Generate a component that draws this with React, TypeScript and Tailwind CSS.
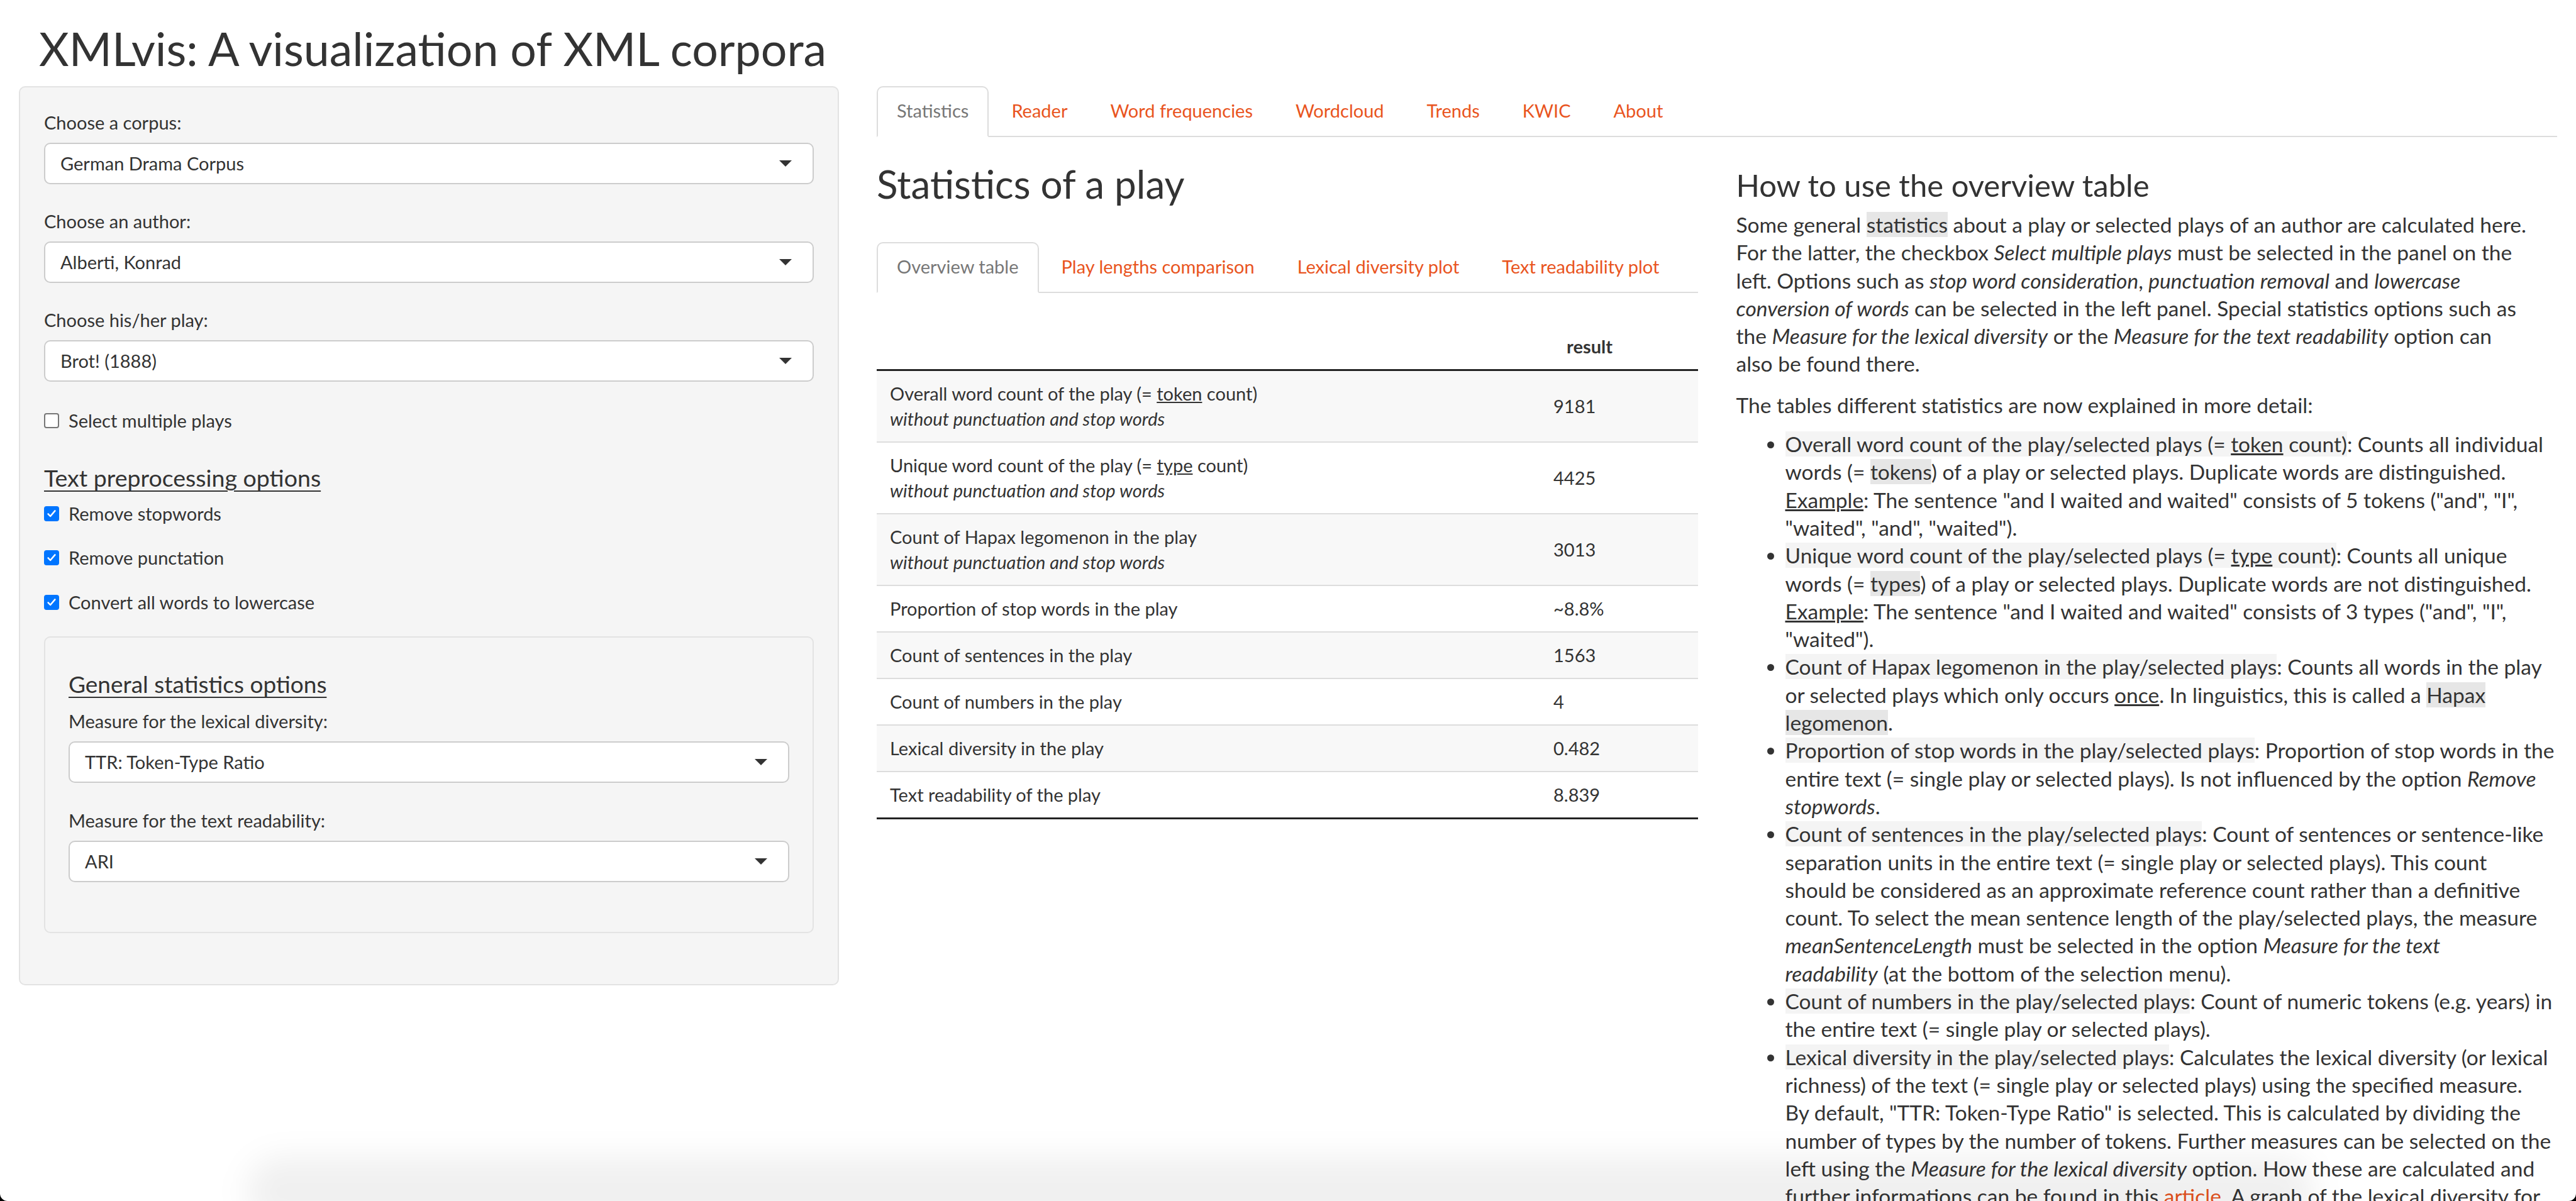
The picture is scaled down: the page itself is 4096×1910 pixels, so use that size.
import React from "react";

const mainTabs = ["Statistics", "Reader", "Word frequencies", "Wordcloud", "Trends", "KWIC", "About"];
const subTabs = ["Overview table", "Play lengths comparison", "Lexical diversity plot", "Text readability plot"];

type Row = { label: React.ReactNode; note?: boolean; value: string };

const rows: Row[] = [
  { label: <>Overall word count of the play (= <u>token</u> count)</>, note: true, value: "9181" },
  { label: <>Unique word count of the play (= <u>type</u> count)</>, note: true, value: "4425" },
  { label: "Count of Hapax legomenon in the play", note: true, value: "3013" },
  { label: "Proportion of stop words in the play", value: "~8.8%" },
  { label: "Count of sentences in the play", value: "1563" },
  { label: "Count of numbers in the play", value: "4" },
  { label: "Lexical diversity in the play", value: "0.482" },
  { label: "Text readability of the play", value: "8.839" },
];

function SelectBox({ value }: { value: string }) {
  return (
    <div className="flex h-[66px] items-center justify-between rounded-[10px] border-2 border-[#ccc] bg-white pl-[24px] pr-[33px]">
      <span>{value}</span>
      <span className="h-0 w-0 border-x-[10px] border-t-[10px] border-x-transparent border-t-[#333]" />
    </div>
  );
}

function Field({ label, value, className = "" }: { label: string; value: string; className?: string }) {
  return (
    <div className={className}>
      <div className="mb-[10px]">{label}</div>
      <SelectBox value={value} />
    </div>
  );
}

function Check({ label, checked, className = "" }: { label: string; checked?: boolean; className?: string }) {
  return (
    <div className={`flex items-center gap-[15px] ${className}`}>
      {checked ? (
        <span className="flex h-[24px] w-[24px] items-center justify-center rounded-[4px] bg-[#0075ff]">
          <svg viewBox="0 0 24 24" className="h-[20px] w-[20px]">
            <path d="M5.5 12.5l4.2 4.3L18.5 6.5" fill="none" stroke="white" strokeWidth="3" strokeLinecap="round" strokeLinejoin="round" />
          </svg>
        </span>
      ) : (
        <span className="h-[24px] w-[24px] rounded-[4px] border-2 border-[#767676] bg-white" />
      )}
      <span>{label}</span>
    </div>
  );
}

function Tabs({ items, active }: { items: string[]; active: string }) {
  return (
    <ul className="flex border-b-2 border-[#ddd]">
      {items.map((t) => (
        <li key={t} className="-mb-[2px] mr-[4px]">
          <a
            className={
              t === active
                ? "block rounded-t-[10px] border-2 border-[#ddd] border-b-white bg-white px-[30px] pt-[15px] pb-[18px] text-[#777]"
                : "block rounded-t-[10px] border-2 border-transparent px-[30px] pt-[15px] pb-[18px] text-[#e95420]"
            }
          >
            {t}
          </a>
        </li>
      ))}
    </ul>
  );
}

const lead = "bg-[#f4f4f4]";
const dark = "bg-[#e6e6e6]";

export default function App() {
  return (
    <div className="relative min-h-screen bg-white px-[30px] font-['Lato',sans-serif] text-[29px] leading-[44px] text-[#333]">
      <h1 className="pl-[32px] pt-[33px] text-[73.5px] leading-[88px] mb-[16px]">XMLvis: A visualization of XML corpora</h1>

      <div className="grid grid-cols-[1304px_1fr] gap-x-[60px]">
        {/* sidebar */}
        <div className="self-start rounded-[10px] border-2 border-[#e3e3e3] bg-[#f5f5f5] px-[38px] pt-[34px] pb-[81px]">
          <Field label="Choose a corpus:" value="German Drama Corpus" />
          <Field label="Choose an author:" value="Alberti, Konrad" className="mt-[37px]" />
          <Field label="Choose his/her play:" value="Brot! (1888)" className="mt-[37px]" />
          <Check label="Select multiple plays" className="mt-[40px]" />

          <h4 className="mt-[45px] text-[37.5px] leading-[47px] underline decoration-[2px] underline-offset-[6px]">Text preprocessing options</h4>
          <Check label="Remove stopwords" checked className="mt-[12px]" />
          <Check label="Remove punctation" checked className="mt-[26px]" />
          <Check label="Convert all words to lowercase" checked className="mt-[27px]" />

          <div className="mt-[32px] rounded-[10px] border-2 border-[#e3e3e3] bg-[#f5f5f5] px-[37px] pt-[50px] pb-[79px]">
            <h4 className="text-[37px] leading-[47px] underline decoration-[2px] underline-offset-[6px]">General statistics options</h4>
            <Field label="Measure for the lexical diversity:" value="TTR: Token-Type Ratio" className="mt-[14px]" />
            <Field label="Measure for the text readability:" value="ARI" className="mt-[38px]" />
          </div>
        </div>

        {/* main panel */}
        <div>
          <Tabs items={mainTabs} active="Statistics" />

          <div className="grid grid-cols-2 gap-x-[61px]">
            <div>
              <h2 className="mt-[38px] text-[62px] leading-[72px]">Statistics of a play</h2>
              <div className="mt-[57px]">
                <Tabs items={subTabs} active="Overview table" />
              </div>

              <div className="mt-[49px]">
                <div className="grid grid-cols-[1055px_1fr] border-b-[3px] border-[#222]">
                  <div className="px-[21px] py-[14px]">&nbsp;</div>
                  <div className="py-[14px] pl-[42px] font-bold">result</div>
                </div>
                {rows.map((r, i) => (
                  <div
                    key={i}
                    className={`grid grid-cols-[1055px_1fr] items-center leading-[40px] ${i % 2 === 0 ? "bg-[#f8f8f8]" : "bg-white"} ${
                      i === rows.length - 1 ? "border-b-[3px] border-[#222]" : "border-b-2 border-[#ddd]"
                    }`}
                  >
                    <div className="px-[21px] py-[16px]">
                      <div>{r.label}</div>
                      {r.note && <div className="italic">without punctuation and stop words</div>}
                    </div>
                    <div className="px-[21px] py-[16px]">{r.value}</div>
                  </div>
                ))}
              </div>
            </div>

            <div className="text-[33.5px] leading-[44.3px]">
              <h3 className="mt-[46px] text-[49px] leading-[61px]">How to use the overview table</h3>
              <p className="mt-[10px]">
                Some general <span className={dark}>statistics</span> about a play or selected plays of an author are calculated here.
                <br />
                For the latter, the checkbox <i>Select multiple plays</i> must be selected in the panel on the
                <br />
                left. Options such as <i>stop word consideration</i>, <i>punctuation removal</i> and <i>lowercase</i>
                <br />
                <i>conversion of words</i> can be selected in the left panel. Special statistics options such as
                <br />
                the <i>Measure for the lexical diversity</i> or the <i>Measure for the text readability</i> option can
                <br />
                also be found there.
              </p>
              <p className="mt-[21px]">The tables different statistics are now explained in more detail:</p>
              <ul className="mt-[18px] list-disc pl-[78px]">
                <li>
                  <span className={lead}>
                    Overall word count of the play/selected plays (= <u>token</u> count)
                  </span>
                  : Counts all individual
                  <br />
                  words (= <span className={dark}>tokens</span>) of a play or selected plays. Duplicate words are distinguished.
                  <br />
                  <u>Example</u>: The sentence "and I waited and waited" consists of 5 tokens ("and", "I",
                  <br />
                  "waited", "and", "waited").
                </li>
                <li>
                  <span className={lead}>
                    Unique word count of the play/selected plays (= <u>type</u> count)
                  </span>
                  : Counts all unique
                  <br />
                  words (= <span className={dark}>types</span>) of a play or selected plays. Duplicate words are not distinguished.
                  <br />
                  <u>Example</u>: The sentence "and I waited and waited" consists of 3 types ("and", "I",
                  <br />
                  "waited").
                </li>
                <li>
                  <span className={lead}>Count of Hapax legomenon in the play/selected plays</span>: Counts all words in the play
                  <br />
                  or selected plays which only occurs <u>once</u>. In linguistics, this is called a{" "}
                  <span className={dark}>
                    Hapax
                    <br />
                    legomenon
                  </span>
                  .
                </li>
                <li>
                  <span className={lead}>Proportion of stop words in the play/selected plays</span>: Proportion of stop words in the
                  <br />
                  entire text (= single play or selected plays). Is not influenced by the option{" "}
                  <i>
                    Remove
                    <br />
                    stopwords
                  </i>
                  .
                </li>
                <li>
                  <span className={lead}>Count of sentences in the play/selected plays</span>: Count of sentences or sentence-like
                  <br />
                  separation units in the entire text (= single play or selected plays). This count
                  <br />
                  should be considered as an approximate reference count rather than a definitive
                  <br />
                  count. To select the mean sentence length of the play/selected plays, the measure
                  <br />
                  <i>meanSentenceLength</i> must be selected in the option{" "}
                  <i>
                    Measure for the text
                    <br />
                    readability
                  </i>{" "}
                  (at the bottom of the selection menu).
                </li>
                <li>
                  <span className={lead}>Count of numbers in the play/selected plays</span>: Count of numeric tokens (e.g. years) in
                  <br />
                  the entire text (= single play or selected plays).
                </li>
                <li>
                  <span className={lead}>Lexical diversity in the play/selected plays</span>: Calculates the lexical diversity (or
                  lexical
                  <br />
                  richness) of the text (= single play or selected plays) using the specified measure.
                  <br />
                  By default, "TTR: Token-Type Ratio" is selected. This is calculated by dividing the
                  <br />
                  number of types by the number of tokens. Further measures can be selected on the
                  <br />
                  left using the <i>Measure for the lexical diversity</i> option. How these are calculated and
                  <br />
                  further informations can be found in this <a className="text-[#e95420]">article</a>. A graph of the lexical
                  diversity for
                  <br />
                  each selected play can be found in the tab <i>Lexical diversity plot</i>.
                </li>
                <li>
                  <span className={lead}>Text readability of the play/selected plays</span>: Calculates the readability of the text
                  (= single play or selected plays) using the specified measure.
                </li>
              </ul>
            </div>
          </div>
        </div>
      </div>

      {/* soft shadow at the bottom edge of the window */}
      <div className="pointer-events-none fixed bottom-[-40px] left-[392px] right-[416px] h-[110px] rounded-[60px] bg-black/[0.06] blur-[24px]" />
      {/* rounded window corners */}
      <div className="pointer-events-none fixed bottom-0 left-0 h-[12px] w-[12px] bg-black">
        <div className="h-full w-full rounded-bl-[12px] bg-white" />
      </div>
      <div className="pointer-events-none fixed bottom-0 right-0 h-[12px] w-[12px] bg-black">
        <div className="h-full w-full rounded-br-[12px] bg-white" />
      </div>
    </div>
  );
}
